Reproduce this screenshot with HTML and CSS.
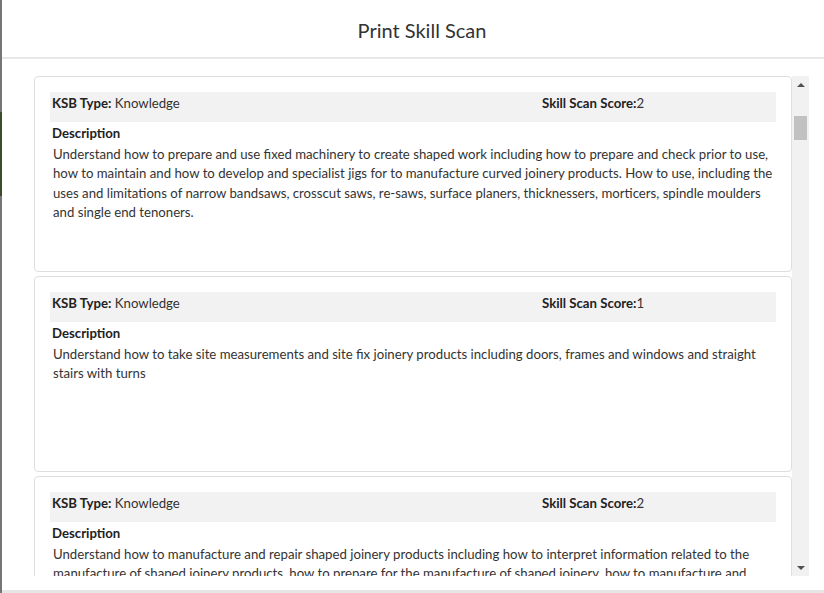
FILE: index.html
```html
<!DOCTYPE html>
<html lang="en">
<head>
<meta charset="utf-8">
<title>Print Skill Scan</title>
<link rel="stylesheet" href="styles.css">
</head>
<body>
<div class="modal">
  <div class="modal-header">
    <h4 class="modal-title">Print Skill Scan</h4>
  </div>
  <div class="modal-body">
    <div class="list">
      <div class="card">
        <div class="meta">
          <div><span class="label">KSB Type:</span> Knowledge</div>
          <div><span class="label">Skill Scan Score:</span>2</div>
        </div>
        <div class="desc-title">Description</div>
        <p class="desc">Understand how to prepare and use fixed machinery to create shaped work including how to prepare and check prior to use, how to maintain and how to develop and specialist jigs for to manufacture curved joinery products. How to use, including the uses and limitations of narrow bandsaws, crosscut saws, re-saws, surface planers, thicknessers, morticers, spindle moulders and single end tenoners.</p>
      </div>
      <div class="card">
        <div class="meta">
          <div><span class="label">KSB Type:</span> Knowledge</div>
          <div><span class="label">Skill Scan Score:</span>1</div>
        </div>
        <div class="desc-title">Description</div>
        <p class="desc">Understand how to take site measurements and site fix joinery products including doors, frames and windows and straight stairs with turns</p>
      </div>
      <div class="card">
        <div class="meta">
          <div><span class="label">KSB Type:</span> Knowledge</div>
          <div><span class="label">Skill Scan Score:</span>2</div>
        </div>
        <div class="desc-title">Description</div>
        <p class="desc">Understand how to manufacture and repair shaped joinery products including how to interpret information related to the manufacture of shaped joinery products, how to prepare for the manufacture of shaped joinery, how to manufacture and repair shaped joinery products.</p>
      </div>
    </div>
    <div class="scrollbar">
      <div class="sb-btn"><span class="arrow-up"></span></div>
      <div class="sb-track"><div class="sb-thumb"></div></div>
      <div class="sb-btn"><span class="arrow-down"></span></div>
    </div>
  </div>
  <div class="modal-footer"></div>
</div>
</body>
</html>
```
FILE: styles.css
```css
* { box-sizing: border-box; }
html, body { margin: 0; height: 100%; }
body {
  padding-left: 2px;
  background: linear-gradient(to bottom, #767676 0, #767676 112px, #3e4a2c 112px, #3e4a2c 196px, #767676 196px);
  font-family: Lato, "Open Sans", sans-serif;
  color: #333;
  overflow: hidden;
}
.modal {
  height: 593px;
  background: #fff;
  display: flex;
  flex-direction: column;
}
.modal-header {
  height: 59px;
  border-bottom: 2px solid #e8e8e8;
  display: flex;
  align-items: center;
  justify-content: center;
  padding-top: 2px;
}
.modal-title {
  margin: 0;
  font-size: 20px;
  font-weight: 400;
  color: #333;
  padding-left: 18px;
}
.modal-body {
  height: 531px;
  padding: 17px 15px 14px 32px;
  display: flex;
}
.list {
  flex: 1;
  overflow: hidden;
}
.card {
  height: 196px;
  margin-bottom: 4px;
  border: 1px solid #dedede;
  border-radius: 4px;
  padding: 15px;
  font-size: 13.2px;
  line-height: 19.5px;
}
.meta {
  height: 30px;
  background: #f2f2f2;
  padding: 2px 2px 0;
  display: grid;
  grid-template-columns: 490px 1fr;
}
.label { font-weight: 700; color: #222; }
.desc-title {
  font-weight: 700;
  color: #222;
  padding-left: 2px;
  margin-top: 2px;
}
.desc {
  margin: 0;
  padding-left: 3px;
  padding-top: 1px;
  color: #333;
}
.scrollbar {
  width: 17px;
  background: #f1f1f1;
  display: flex;
  flex-direction: column;
}
.sb-btn {
  height: 17px;
  display: flex;
  align-items: center;
  justify-content: center;
}
.arrow-up, .arrow-down {
  width: 0; height: 0;
  border-left: 4px solid transparent;
  border-right: 4px solid transparent;
}
.arrow-up { border-bottom: 4px solid #505050; }
.arrow-down { border-top: 4px solid #505050; }
.sb-track { flex: 1; padding-top: 23px; }
.sb-thumb {
  width: 13px;
  height: 24px;
  margin-left: 2px;
  background: #c1c1c1;
}
.modal-footer {
  flex: 1;
  border-top: 3px solid #e6e6e6;
}
```
